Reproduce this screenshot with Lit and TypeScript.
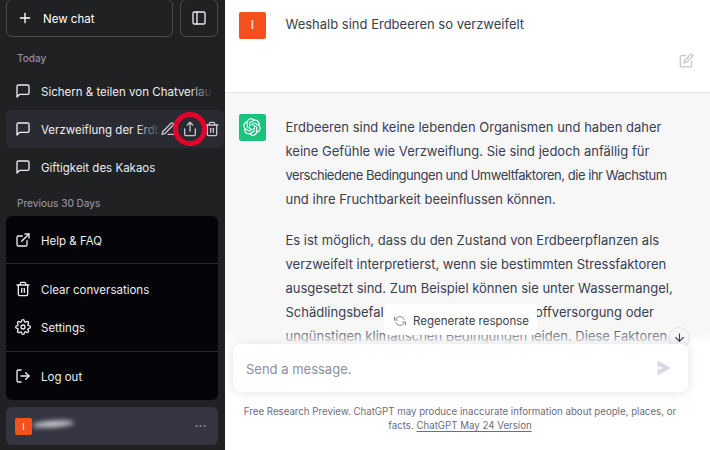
import { LitElement, html, css, svg } from "lit";
import { customElement } from "lit/decorators.js";

const ic = (body: unknown, size = 16, cls = "") => html`<svg class="ic ${cls}" width=${size} height=${size} viewBox="0 0 24 24" fill="none" stroke="currentColor" stroke-width="2" stroke-linecap="round" stroke-linejoin="round">${body}</svg>`;

const I = {
  plus: svg`<line x1="12" y1="5" x2="12" y2="19"/><line x1="5" y1="12" x2="19" y2="12"/>`,
  panel: svg`<rect x="3" y="3" width="18" height="18" rx="2"/><line x1="9" y1="3" x2="9" y2="21"/>`,
  msg: svg`<path d="M21 15a2 2 0 0 1-2 2H7l-4 4V5a2 2 0 0 1 2-2h14a2 2 0 0 1 2 2z"/>`,
  pencil: svg`<path d="M12 20h9"/><path d="M16.5 3.5a2.121 2.121 0 0 1 3 3L7 19l-4 1 1-4L16.5 3.5z"/>`,
  share: svg`<path d="M4 12v8a2 2 0 0 0 2 2h12a2 2 0 0 0 2-2v-8"/><polyline points="16 6 12 2 8 6"/><line x1="12" y1="2" x2="12" y2="15"/>`,
  trash: svg`<polyline points="3 6 5 6 21 6"/><path d="M19 6v14a2 2 0 0 1-2 2H7a2 2 0 0 1-2-2V6m3 0V4a2 2 0 0 1 2-2h4a2 2 0 0 1 2 2v2"/><line x1="10" y1="11" x2="10" y2="17"/><line x1="14" y1="11" x2="14" y2="17"/>`,
  ext: svg`<path d="M18 13v6a2 2 0 0 1-2 2H5a2 2 0 0 1-2-2V8a2 2 0 0 1 2-2h6"/><polyline points="15 3 21 3 21 9"/><line x1="10" y1="14" x2="21" y2="3"/>`,
  gear: svg`<circle cx="12" cy="12" r="3"/><path d="M19.4 15a1.65 1.65 0 0 0 .33 1.82l.06.06a2 2 0 0 1 0 2.83 2 2 0 0 1-2.83 0l-.06-.06a1.65 1.65 0 0 0-1.82-.33 1.65 1.65 0 0 0-1 1.51V21a2 2 0 0 1-2 2 2 2 0 0 1-2-2v-.09A1.65 1.65 0 0 0 9 19.4a1.65 1.65 0 0 0-1.82.33l-.06.06a2 2 0 0 1-2.83 0 2 2 0 0 1 0-2.83l.06-.06a1.65 1.65 0 0 0 .33-1.82 1.65 1.65 0 0 0-1.51-1H3a2 2 0 0 1-2-2 2 2 0 0 1 2-2h.09A1.65 1.65 0 0 0 4.6 9a1.65 1.65 0 0 0-.33-1.82l-.06-.06a2 2 0 0 1 0-2.83 2 2 0 0 1 2.83 0l.06.06a1.65 1.65 0 0 0 1.82.33H9a1.65 1.65 0 0 0 1-1.51V3a2 2 0 0 1 2-2 2 2 0 0 1 2 2v.09a1.65 1.65 0 0 0 1 1.51 1.65 1.65 0 0 0 1.82-.33l.06-.06a2 2 0 0 1 2.83 0 2 2 0 0 1 0 2.83l-.06.06a1.65 1.65 0 0 0-.33 1.82V9a1.65 1.65 0 0 0 1.51 1H21a2 2 0 0 1 2 2 2 2 0 0 1-2 2h-.09a1.65 1.65 0 0 0-1.51 1z"/>`,
  logout: svg`<path d="M9 21H5a2 2 0 0 1-2-2V5a2 2 0 0 1 2-2h4"/><polyline points="16 17 21 12 16 7"/><line x1="21" y1="12" x2="9" y2="12"/>`,
  edit: svg`<path d="M11 4H4a2 2 0 0 0-2 2v14a2 2 0 0 0 2 2h14a2 2 0 0 0 2-2v-7"/><path d="M18.5 2.5a2.121 2.121 0 0 1 3 3L12 15l-4 1 1-4 9.5-9.5z"/>`,
  refresh: svg`<polyline points="1 4 1 10 7 10"/><polyline points="23 20 23 14 17 14"/><path d="M20.49 9A9 9 0 0 0 5.64 5.64L1 10m22 4l-4.64 4.36A9 9 0 0 1 3.51 15"/>`,
  down: svg`<line x1="12" y1="5" x2="12" y2="19"/><polyline points="19 12 12 19 5 12"/>`,
};

const LOGO = "M37.5324 16.8707C37.9808 15.5241 38.1363 14.0974 37.9886 12.6859C37.8409 11.2744 37.3934 9.91076 36.676 8.68622C35.6126 6.83404 33.9882 5.3676 32.0373 4.4985C30.0864 3.62941 27.9098 3.40259 25.8215 3.85078C24.8796 2.7893 23.7219 1.94125 22.4257 1.36341C21.1295 0.785575 19.7249 0.491269 18.3058 0.500197C16.1708 0.495044 14.0893 1.16803 12.3614 2.42214C10.6335 3.67624 9.34853 5.44666 8.6917 7.47815C7.30085 7.76286 5.98686 8.3414 4.8377 9.17505C3.68854 10.0087 2.73073 11.0782 2.02839 12.312C0.956464 14.1591 0.498905 16.2988 0.721698 18.4228C0.944492 20.5467 1.83612 22.5449 3.268 24.1293C2.81966 25.4759 2.66413 26.9026 2.81182 28.3141C2.95951 29.7256 3.40701 31.0892 4.12437 32.3138C5.18791 34.1659 6.8123 35.6322 8.76321 36.5013C10.7141 37.3704 12.8907 37.5973 14.9789 37.1492C15.9208 38.2107 17.0786 39.0587 18.3747 39.6366C19.6709 40.2144 21.0755 40.5087 22.4946 40.4998C24.6307 40.5054 26.7133 39.8321 28.4418 38.5772C30.1704 37.3223 31.4556 35.5506 32.1119 33.5179C33.5027 33.2332 34.8167 32.6547 35.9659 31.821C37.115 30.9874 38.0728 29.9178 38.7752 28.684C39.8458 26.8371 40.3023 24.6979 40.0789 22.5748C39.8556 20.4517 38.9639 18.4544 37.5324 16.8707ZM22.4978 37.8849C20.7443 37.8874 19.0459 37.2733 17.6994 36.1501C17.7601 36.117 17.8666 36.0586 17.936 36.0161L25.9004 31.4156C26.1003 31.3019 26.2663 31.137 26.3813 30.9378C26.4964 30.7386 26.5563 30.5124 26.5549 30.2825V19.0542L29.9213 20.998C29.9389 21.0068 29.9541 21.0198 29.9656 21.0359C29.977 21.052 29.9842 21.0707 29.9867 21.0902V30.3889C29.9842 32.375 29.1946 34.2791 27.7909 35.6841C26.3872 37.0892 24.4838 37.8806 22.4978 37.8849ZM6.39227 31.0064C5.51397 29.4888 5.19742 27.7107 5.49804 25.9832C5.55718 26.0187 5.66048 26.0818 5.73461 26.1244L13.699 30.7248C13.8975 30.8408 14.1233 30.902 14.3532 30.902C14.583 30.902 14.8088 30.8408 15.0073 30.7248L24.731 25.1103V28.9979C24.7321 29.0177 24.7283 29.0376 24.7199 29.0556C24.7115 29.0736 24.6988 29.0893 24.6829 29.1012L16.6317 33.7497C14.9096 34.7416 12.8643 35.0097 10.9447 34.4954C9.02506 33.9811 7.38785 32.7263 6.39227 31.0064ZM4.29707 13.6194C5.17156 12.0998 6.55279 10.9364 8.19885 10.3327C8.19885 10.4013 8.19491 10.5228 8.19491 10.6071V19.808C8.19351 20.0378 8.25334 20.2638 8.36823 20.4629C8.48312 20.6619 8.64893 20.8267 8.84863 20.9404L18.5723 26.5542L15.206 28.4979C15.1894 28.5089 15.1703 28.5155 15.1505 28.5173C15.1307 28.5191 15.1107 28.516 15.0924 28.5082L7.04046 23.8557C5.32135 22.8601 4.06716 21.2235 3.55289 19.3046C3.03862 17.3858 3.30624 15.3413 4.29707 13.6194ZM31.955 20.0556L22.2312 14.4411L25.5976 12.4981C25.6142 12.4872 25.6333 12.4805 25.6531 12.4787C25.6729 12.4769 25.6928 12.4801 25.7111 12.4879L33.7631 17.1364C34.9967 17.849 36.0017 18.8982 36.6606 20.1613C37.3194 21.4244 37.6047 22.849 37.4832 24.2684C37.3617 25.6878 36.8382 27.0432 35.9743 28.1759C35.1103 29.3086 33.9415 30.1717 32.6047 30.6641C32.6047 30.5947 32.6047 30.4733 32.6047 30.3889V21.188C32.6066 20.9586 32.5474 20.7328 32.4332 20.5338C32.319 20.3348 32.154 20.1698 31.955 20.0556ZM35.3055 15.0128C35.2464 14.9765 35.1431 14.9142 35.069 14.8717L27.1045 10.2712C26.906 10.1554 26.6803 10.0943 26.4504 10.0943C26.2206 10.0943 25.9948 10.1554 25.7963 10.2712L16.0726 15.8858V11.9982C16.0715 11.9783 16.0753 11.9585 16.0837 11.9405C16.0921 11.9225 16.1048 11.9068 16.1207 11.8949L24.1719 7.25025C25.4053 6.53903 26.8158 6.19376 28.2383 6.25482C29.6608 6.31589 31.0364 6.78077 32.2044 7.59508C33.3723 8.40939 34.2842 9.53945 34.8334 10.8531C35.3826 12.1667 35.5464 13.6095 35.3055 15.0128ZM14.2424 21.9419L10.8752 19.9981C10.8576 19.9893 10.8423 19.9763 10.8309 19.9602C10.8195 19.9441 10.8122 19.9254 10.8098 19.9058V10.6071C10.8107 9.18295 11.2173 7.78848 11.9819 6.58696C12.7466 5.38544 13.8377 4.42659 15.1275 3.82264C16.4173 3.21869 17.8524 2.99464 19.2649 3.1767C20.6775 3.35876 22.0089 3.93941 23.1034 4.85067C23.0427 4.88379 22.937 4.94215 22.8668 4.98473L14.9024 9.58517C14.7025 9.69878 14.5366 9.86356 14.4215 10.0626C14.3065 10.2616 14.2466 10.4877 14.2479 10.7175L14.2424 21.9419ZM16.071 17.9991L20.4018 15.4978L24.7325 17.9975V22.9985L20.4018 25.4983L16.071 22.9985V17.9991Z";

@customElement("app-root")
export class AppRoot extends LitElement {
  static styles = css`
    :host { display: flex; width: 710px; height: 450px; overflow: hidden; font-family: Inter, "Noto Sans", sans-serif; font-size: 11.5px; -webkit-font-smoothing: antialiased; }
    * { box-sizing: border-box; }
    .ic { flex: none; display: block; }

    .side { position: relative; width: 225px; flex: none; height: 450px; background: #202123; color: #ececf1; display: flex; flex-direction: column; padding: 0 0 0 6px; overflow: hidden; }
    .top { display: flex; gap: 7px; margin-top: -1px; width: 212px; flex: none; }
    .new { flex: 1; height: 38px; border: 1px solid #4d4d4f; border-radius: 6px; display: flex; align-items: center; gap: 10px; padding-left: 10px; color: #fff; }
    .new span { padding-top: 2px; }
    .tog { width: 38px; height: 38px; border: 1px solid #4d4d4f; border-radius: 6px; display: flex; align-items: center; justify-content: center; color: #ececf1; }
    .lbl { font-size: 10px; font-weight: 500; color: #8e8ea0; padding-left: 11px; height: 13px; line-height: 13px; flex: none; }
    .lbl.today { margin-top: 15px; margin-bottom: 7px; }
    .lbl.prev { margin-top: 11px; margin-bottom: 6px; }
    .row { position: relative; height: 38px; flex: none; display: flex; align-items: center; gap: 10px; padding: 0 11px 0 9px; width: 218px; color: #ececf1; white-space: nowrap; overflow: hidden; border-radius: 6px; }
    .row .t { flex: 1; overflow: hidden; position: relative; padding-top: 2px; }
    .row .t::after { content: ""; position: absolute; top: 0; bottom: 0; right: 0; width: 24px; background: linear-gradient(to right, rgba(32,33,35,0), #202123); }
    .row.on { background: #2a2b32; }
    .row.on .t { flex: none; width: 119px; }
    .row.on .t::after { background: linear-gradient(to right, rgba(42,43,50,0), #2a2b32); }
    .plain .t::after { display: none; }
    .acts { position: absolute; right: 4px; top: 0; bottom: 0; display: flex; align-items: center; gap: 6px; color: #c5c5d2; }
    .menu { width: 212px; height: 184px; background: #050509; border-radius: 6px; flex: none; display: flex; flex-direction: column; color: #ececf1; }
    .m { display: flex; align-items: center; gap: 10px; padding-left: 9px; height: 38px; color: #ececf1; flex: none; }
    .m span { padding-top: 2px; }
    .m:first-child { margin-top: 5px; }
    .hr { height: 1px; background: #2a2b32; margin: 4px 0 6px; flex: none; }
    .hr.b { margin: 5px 0; }
    .user { margin-top: 7px; width: 212px; height: 38px; background: #343541; border-radius: 6px; display: flex; align-items: center; padding: 0 12px 0 9px; flex: none; }
    .av { width: 17px; height: 17px; background: #f4511e; color: #fff; border-radius: 2px; font-size: 9px; display: flex; align-items: center; justify-content: center; flex: none; position: relative; z-index: 1; }
    .blur { width: 42px; height: 6px; margin-top: -4px; border-radius: 50%; background: #d5d5dc; filter: blur(2.5px); transform: rotate(-4deg); }
    .dots { margin-left: auto; color: #8e8ea0; display: block; }
    .ring { position: absolute; left: 173px; top: 112px; width: 34px; height: 34px; border: 5px solid #e4002b; border-radius: 50%; }

    .main { position: relative; flex: 1; height: 450px; overflow: hidden; background: #fff; color: #374151; font-size: 13px; line-height: 24px; }
    .msg { display: flex; gap: 20px; padding: 12px 14px 0 14px; }
    .msg .sq { width: 26.5px; height: 26.5px; border-radius: 2px; flex: none; display: flex; align-items: center; justify-content: center; color: #fff; font-size: 12px; }
    .user-msg { height: 93px; border-bottom: 1px solid #e5e5e5; position: relative; flex: none; }
    .user-msg .eicon { position: absolute; right: 16px; top: 53px; color: #c5c5d2; }
    .user-msg .sq { background: #f4511e; }
    .ai { background: #f7f7f8; height: 360px; padding-top: 21px; }
    .ai .sq { background: #19c37d; }
    .ai .body { width: 420px; flex: none; padding-top: 1px; }
    .ai p { margin: 0 0 17px; }
    .ai .ln { display: block; white-space: nowrap; }
    .ai .tight { letter-spacing: -0.47px; }
    .bottom { position: absolute; left: 0; right: 0; bottom: 0; height: 147px; display: flex; flex-direction: column; align-items: flex-start; background: linear-gradient(to bottom, rgba(255,255,255,0) 25px, rgba(255,255,255,.5) 35px, #fff 41px); }
    .regen { position: absolute; left: 159px; top: 1px; width: 153px; height: 31px; background: #fff; border-radius: 4px; display: flex; align-items: center; gap: 7px; padding: 3px 0 0 10px; font-size: 11.5px; color: #40414f; line-height: 1; }
    .regen span { padding-top: 2px; }
    .regen .ic { color: #8e8ea0; }
    .dn { position: absolute; left: 443px; top: 24px; width: 22px; height: 22px; border-radius: 50%; border: 1px solid #e2e2e6; background: #f7f7f8; color: #40414f; display: flex; align-items: flex-start; justify-content: center; padding-top: 3px; }
    .box { position: relative; margin: 41px 0 0 8px; width: 455px; height: 48px; background: #fff; border-radius: 8px; box-shadow: 0 0 12px rgba(0,0,0,.12); display: flex; align-items: center; justify-content: space-between; padding: 0 17px 0 13px; color: #8e8ea0; font-size: 13px; flex: none; }
    .box span { padding-top: 2px; }
    .send { color: #d9d9e3; display: block; }
    .foot { margin: 13px 0 0 -3px; width: 476px; text-align: center; font-size: 9.7px; line-height: 14px; color: #6e6e80; }
    .foot u { text-underline-offset: 2px; }
  `;

  render() {
    return html`
      <aside class="side">
        <div class="top">
          <div class="new">${ic(I.plus, 16)}<span>New chat</span></div>
          <div class="tog">${ic(I.panel, 16)}</div>
        </div>
        <div class="lbl today">Today</div>
        <div class="row">${ic(I.msg)}<span class="t">Sichern &amp; teilen von Chatverlauf</span></div>
        <div class="row on">${ic(I.msg)}<span class="t">Verzweiflung der Erdbeeren</span>
          <div class="acts">${ic(I.pencil)}${ic(I.share)}${ic(I.trash)}</div></div>
        <div class="row plain">${ic(I.msg)}<span class="t">Giftigkeit des Kakaos</span></div>
        <div class="lbl prev">Previous 30 Days</div>
        <div class="menu">
          <div class="m">${ic(I.ext)}<span>Help &amp; FAQ</span></div>
          <div class="hr"></div>
          <div class="m">${ic(I.trash)}<span>Clear conversations</span></div>
          <div class="m">${ic(I.gear)}<span>Settings</span></div>
          <div class="hr b"></div>
          <div class="m">${ic(I.logout)}<span>Log out</span></div>
        </div>
        <div class="user"><div class="av">I</div><div class="blur"></div>
          <svg class="dots" width="11" height="4" viewBox="0 0 11 4" fill="currentColor"><circle cx="1.5" cy="2" r="1"></circle><circle cx="5.5" cy="2" r="1"></circle><circle cx="9.5" cy="2" r="1"></circle></svg>
        </div>
        <div class="ring"></div>
      </aside>
      <main class="main">
        <div class="msg user-msg">
          <div class="sq">I</div><div>Weshalb sind Erdbeeren so verzweifelt</div>
          <div class="eicon">${ic(I.edit, 15)}</div>
        </div>
        <div class="msg ai">
          <div class="sq"><svg width="18" height="18" viewBox="0 0 41 41" fill="currentColor"><path d=${LOGO}></path></svg></div>
          <div class="body">
            <p>
              <span class="ln">Erdbeeren sind keine lebenden Organismen und haben daher</span>
              <span class="ln">keine Gefühle wie Verzweiflung. Sie sind jedoch anfällig für</span>
              <span class="ln tight">verschiedene Bedingungen und Umweltfaktoren, die ihr Wachstum</span>
              <span class="ln">und ihre Fruchtbarkeit beeinflussen können.</span>
            </p>
            <p>
              <span class="ln">Es ist möglich, dass du den Zustand von Erdbeerpflanzen als</span>
              <span class="ln">verzweifelt interpretierst, wenn sie bestimmten Stressfaktoren</span>
              <span class="ln">ausgesetzt sind. Zum Beispiel können sie unter Wassermangel,</span>
              <span class="ln">Schädlingsbefall, unzureichender Nährstoffversorgung oder</span>
              <span class="ln">ungünstigen klimatischen Bedingungen leiden. Diese Faktoren</span>
            </p>
          </div>
        </div>
        <div class="bottom">
          <div class="regen">${ic(I.refresh, 12)}<span>Regenerate response</span></div>
          <div class="dn">${ic(I.down, 13)}</div>
          <div class="box"><span>Send a message.</span>
            <svg class="send" width="14" height="14" viewBox="0 0 16 16" fill="currentColor"><path d="M.5 1.163A1 1 0 0 1 1.97.28l12.868 6.837a1 1 0 0 1 0 1.766L1.969 15.72A1 1 0 0 1 .5 14.836V10.33a1 1 0 0 1 .816-.983L8.5 8 1.316 6.653A1 1 0 0 1 .5 5.67V1.163Z"></path></svg>
          </div>
          <div class="foot">Free Research Preview. ChatGPT may produce inaccurate information about people, places, or<br>facts. <u>ChatGPT May 24 Version</u></div>
        </div>
      </main>`;
  }
}
